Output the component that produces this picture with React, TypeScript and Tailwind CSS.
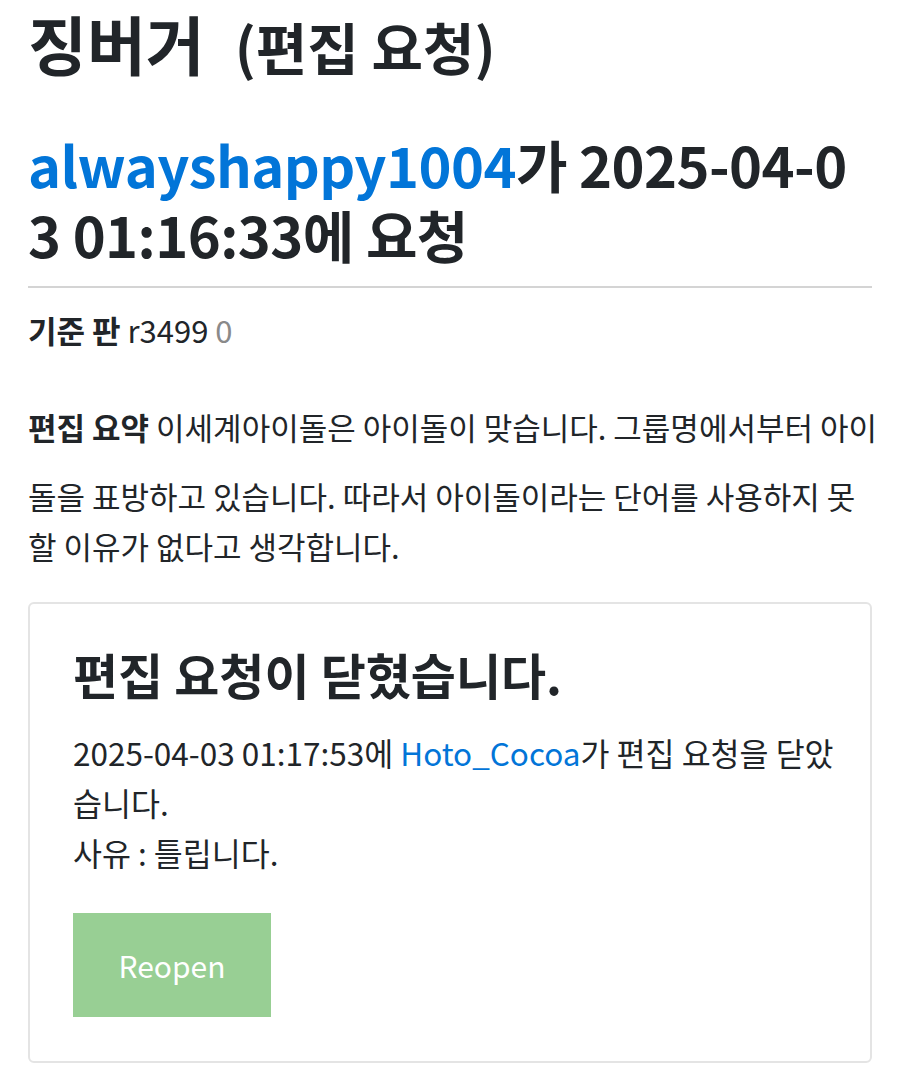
export default function App() {
  return (
    <div
      className="min-h-[1079px] bg-white px-[28px] text-[#212529]"
      style={{ fontFamily: '"Noto Sans CJK KR", "Noto Sans", sans-serif' }}
    >
      <h1 className="text-[64px] leading-[84px] font-bold whitespace-nowrap">
        징버거<small className="ml-[30px] text-[56px]">(편집 요청)</small>
      </h1>
      <h2 className="mt-[41px] text-[56px] leading-[70px] font-bold tracking-[-0.01em] whitespace-nowrap">
        <a className="text-[#0275d8]">alwayshappy1004</a>가 2025-04-0
        <br />3 01:16:33에 요청
      </h2>
      <hr className="mt-[17px] border-t-2 border-[#d4d4d4]" />
      <p className="mt-[22px] text-[31px] leading-[40px]">
        <b>기준 판</b> r3499 <span className="text-[#8a8a8a]">0</span>
      </p>
      <div className="mt-[52px] text-[31px] leading-[50px] whitespace-nowrap">
        <p>
          <b>편집 요약</b> 이세계아이돌은 아이돌이 맞습니다. 그룹명에서부터 아이
        </p>
        <p className="mt-[19px]">
          돌을 표방하고 있습니다. 따라서 아이돌이라는 단어를 사용하지 못
          <br />할 이유가 없다고 생각합니다.
        </p>
      </div>
      <div className="mt-[31px] rounded-[6px] border-2 border-[#e4e4e4] px-[43px] pt-[40px] pb-[44px]">
        <h3 className="text-[49px] leading-[60px] font-bold">편집 요청이 닫혔습니다.</h3>
        <p className="mt-[23px] text-[31.5px] leading-[50px] whitespace-nowrap">
          2025-04-03 01:17:53에 <a className="text-[#0275d8]">Hoto_Cocoa</a>가 편집 요청을 닫았
          <br />
          습니다.
          <br />
          사유 : 틀립니다.
        </p>
        <button className="mt-[36px] block h-[104px] w-[198px] bg-[#98cf94] text-[30px] text-white">
          Reopen
        </button>
      </div>
    </div>
  );
}
